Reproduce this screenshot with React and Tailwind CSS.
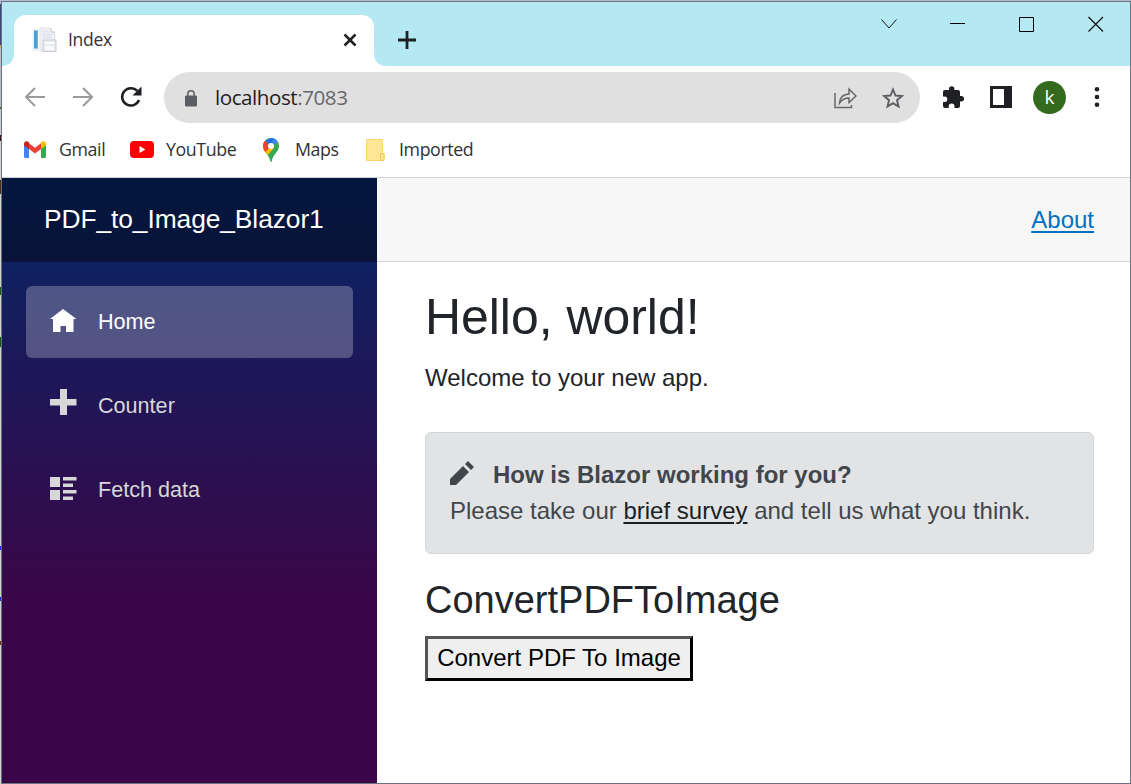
import React from "react";

const ui = "font-['Open_Sans','Noto_Sans',sans-serif]";

function Favicon() {
  return (
    <svg width="25" height="26" viewBox="0 0 25 26" className="mb-px shrink-0">
      <rect x="0.500" y="2" width="6" height="22" fill="#e9eff5" />
      <rect x="2" y="3.500" width="3.800" height="18" fill="#4f9fd0" />
      <path d="M8 1H19l3.500 4v19H8z" fill="#f2f3f6" stroke="#dcdfe3" strokeWidth="1" />
      <path d="M19 1v4h4" fill="#fff" stroke="#c5c9ce" />
      <path d="M10 4.500h7M10 7.500h10M10 10.500h10" stroke="#e0e2ec" strokeWidth="2" />
      <rect x="11" y="13" width="13" height="11.500" fill="#e8ebee" stroke="#c9cdd3" />
      <path d="M13 16h9" stroke="#fff" strokeWidth="2" />
      <rect x="13" y="19" width="9" height="4" fill="#f8f9fa" />
    </svg>
  );
}

function TitleBar() {
  return (
    <div className="flex h-16 shrink-0 items-end bg-[#b4e8f2]">
      <svg width="12" height="12" className="shrink-0"><path d="M12 0v12H0C7 12 12 7 12 0" fill="#fff" /></svg>
      <div className="flex h-[51px] w-[360px] shrink-0 items-center rounded-t-xl bg-white pl-[18px] pr-[17px]">
        <Favicon />
        <span className={`${ui} mb-0.5 ml-[11px] flex-1 text-[17.500px] tracking-[-0.3px] text-[#303236]`}>Index</span>
        <svg width="14" height="14" viewBox="0 0 14 14" className="mb-0.5"><path d="M1.500 1.500l11 11m0-11l-11 11" stroke="#1f2023" strokeWidth="2.500" /></svg>
      </div>
      <svg width="12" height="12" className="shrink-0"><path d="M0 0v12h12C5 12 0 7 0 0" fill="#fff" /></svg>
      <svg width="18" height="18" viewBox="0 0 18 18" className="mb-[17px] ml-[12px]"><path d="M9 0v18M0 9h18" stroke="#1f2023" strokeWidth="2.800" /></svg>
      <div className="mb-[34px] ml-auto mr-[26px] flex items-center gap-[53px]">
        <svg width="16" height="16" viewBox="0 0 16 16"><path d="M.5 3.500L8 12l7.500-8.500" fill="none" stroke="#111" /></svg>
        <svg width="16" height="16" viewBox="0 0 16 16"><path d="M0 7.500h15" stroke="#000" /></svg>
        <svg width="16" height="16" viewBox="0 0 16 16"><path d="M.5 1.500h14v14H.5z" fill="none" stroke="#000" /></svg>
        <svg width="16" height="16" viewBox="0 0 16 16"><path d="M.5 1l14.500 14.500m0-14.500L.5 15.500" stroke="#111" strokeWidth="1.200" /></svg>
      </div>
    </div>
  );
}

function Toolbar() {
  return (
    <div className="flex h-[63px] shrink-0 items-center pl-[23px] pr-[28px]">
      <svg width="20" height="20" viewBox="0 0 20 20" className="mb-0.5"><path d="M20 10H1.500M10 1l-9 9 9 9" fill="none" stroke="#9a9a9a" strokeWidth="2" /></svg>
      <svg width="20" height="20" viewBox="0 0 20 20" className="mb-0.5 ml-[28px]"><path d="M0 10h18.500M10 1l9 9-9 9" fill="none" stroke="#9a9a9a" strokeWidth="2" /></svg>
      <svg width="22" height="22" viewBox="0 0 22 22" className="mb-0.5 ml-[27px]">
        <path d="M17.300 5A8.700 8.700 0 1 0 19 14" fill="none" stroke="#1f2023" strokeWidth="2.500" />
        <path d="M21.500 .5v9h-9z" fill="#1f2023" />
      </svg>
      <div className="ml-[22px] flex h-[51px] w-[756px] items-center rounded-full bg-[#e0e0e0] pl-[21px] pr-[16px]">
        <svg width="12" height="17" viewBox="0 0 12 17" className="mt-0.5">
          <rect y="5.500" width="12" height="11" rx="1.200" fill="#5b5e63" />
          <path d="M2.800 6V4a3.200 3.200 0 0 1 6.400 0v2" fill="none" stroke="#5b5e63" strokeWidth="1.500" />
        </svg>
        <span className={`${ui} ml-[18px] flex-1 text-[20.600px] tracking-[-0.45px] text-[#1f2023]`}>localhost<span className="text-[#66686c]">:7083</span></span>
        <svg width="23" height="22" viewBox="0 0 23 22" className="mr-[25px]" fill="none" stroke="#66686c" strokeWidth="1.500">
          <path d="M1 6v14.500h16.500V18" />
          <path d="M5.500 16C6 10 9.500 7.200 15 7V2l7 7-7 6.500V11c-4.500 0-7 1.500-9.500 5z" />
        </svg>
        <svg width="22" height="22" viewBox="0 0 22 22"><path d="M11 2.500l2.500 6 6.400.5-4.900 4.200 1.500 6.300-5.500-3.400-5.500 3.400L7 13.200 2.100 9l6.400-.5z" fill="none" stroke="#5b5e63" strokeWidth="1.900" /></svg>
      </div>
      <svg width="22" height="22" viewBox="0 0 22 22" className="mb-0.5 ml-[22px]" fill="#1f2023"><path d="M17.500 10H19.300a2.700 2.700 0 0 1 0 5.400H18V20a2 2 0 0 1-2 2h-3.500v-1.500a2.900 2.900 0 0 0-5.800 0V22H3a2 2 0 0 1-2-2v-4h1.500a2.800 2.800 0 0 0 0-5.600H1V6a2 2 0 0 1 2-2h4V3a2.700 2.700 0 0 1 5.400 0v1H16a2 2 0 0 1 2 2v4z" /></svg>
      <svg width="22" height="22" viewBox="0 0 22 22" className="mb-0.5 ml-[26px]"><path d="M1.500 1.500h19v19h-19z" fill="#fff" stroke="#1f2023" strokeWidth="3" /><path d="M14 1h7v20h-7z" fill="#1f2023" /></svg>
      <div className={`${ui} ml-[21px] flex size-[33px] items-center justify-center rounded-full bg-[#336a1e] text-[19px] text-white`}>k</div>
      <svg width="6" height="20" viewBox="0 0 6 20" className="mb-0.5 ml-[28px]" fill="#1f2023"><circle cx="3" cy="2.300" r="2.300" /><circle cx="3" cy="10" r="2.300" /><circle cx="3" cy="17.700" r="2.300" /></svg>
    </div>
  );
}

function Bookmarks() {
  return (
    <div className={`${ui} flex h-[49px] shrink-0 items-center border-b border-[#d0d1d2] pb-[7px] pl-[22px] text-[17.800px] tracking-[-0.4px] text-[#303236]`}>
      <svg width="22" height="17" viewBox="0 0 22 17" className="mr-[13px]">
        <path d="M0 3v12.500A1.500 1.500 0 0 0 1.500 17H5V7z" fill="#4285f4" />
        <path d="M22 3v12.500a1.500 1.500 0 0 1-1.500 1.500H17V7z" fill="#34a853" />
        <path d="M5 2.200l6 4.600 6-4.600v5.800l-6 4.600L5 8z" fill="#ea4335" />
        <path d="M0 4.500V3C0 .3 2.800-.6 5 1.200V8z" fill="#c5221f" />
        <path d="M22 4.500V3c0-2.700-2.800-3.600-5-1.800V8z" fill="#fbbc04" />
      </svg>
      <span className="w-[71px]">Gmail</span>
      <svg width="24" height="17" viewBox="0 0 24 17" className="mr-[12px]"><rect width="24" height="17" rx="4" fill="#f00" /><path d="M9.500 5v7l6-3.500z" fill="#fff" /></svg>
      <span className="w-[97px]">YouTube</span>
      <svg width="16" height="24" viewBox="0 0 16 24" className="mr-[16px]">
        <defs><clipPath id="pin"><path d="M8 0a8 8 0 0 1 8 8c0 6-6 8-7.200 15q-.8 2-1.600 0C6 16 0 14 0 8a8 8 0 0 1 8-8z" /></clipPath></defs>
        <g clipPath="url(#pin)">
          <path d="M0 0h16v24H0z" fill="#34a853" />
          <path d="M8 8L-1 19V9l5-5z" fill="#fbbc04" />
          <path d="M8 8l-6.500 7L-1 10l4-8z" fill="#fbbc04" />
          <path d="M8 8l-5.500 6.200L-1 10V1l4 2z" fill="#ea4335" />
          <path d="M8 8l-7 7.500L4 18l7-8z" fill="#fbbc04" />
          <path d="M2 2.700L8 8l6-6L10-1z" fill="#1a73e8" />
          <path d="M11 0L8 8l7.500-4z" fill="#4285f4" />
        </g>
        <circle cx="8" cy="8" r="3" fill="#fff" />
      </svg>
      <span className="w-[71px]">Maps</span>
      <svg width="19" height="22" viewBox="0 0 19 22" className="mr-[14px]"><path d="M.5.500h16v14h1.500v7H.5z" fill="#ffe694" stroke="#fbd864" /><rect x="14.500" y="14.500" width="3.500" height="7" rx="1" fill="#ffe694" stroke="#eec94e" /></svg>
      <span>Imported</span>
    </div>
  );
}

function NavItem({ label, active, children }) {
  return (
    <a className={`flex h-[72px] items-center rounded-md pl-6 text-[21.6px] ${active ? "bg-white/25 text-white" : "text-[#d7d7d7]"}`}>
      <span className="w-12 pb-1">{children}</span>
      <span className="pt-px">{label}</span>
    </a>
  );
}

function Sidebar() {
  return (
    <aside className="flex w-[375px] shrink-0 flex-col bg-[linear-gradient(180deg,rgb(5,39,103)_0%,#3a0647_70%)]">
      <div className="flex h-[84px] items-center pl-[42px] bg-black/40 text-[26.4px] tracking-[-0.1px] text-white">PDF_to_Image_Blazor1</div>
      <nav className="flex flex-col gap-3 px-6 pt-6">
        <NavItem label="Home" active>
          <svg width="27" height="27" viewBox="0 0 27 27" fill="currentColor"><path d="M13 2L0 12h3v13h7.500v-6h5.500v6h7.500V12h3z" /></svg>
        </NavItem>
        <NavItem label="Counter">
          <svg width="27" height="27" viewBox="0 0 27 27" fill="currentColor" className="-mt-1"><path d="M10 0h7v10h9.500v6.500H17V26h-7v-9.500H0V10h10z" /></svg>
        </NavItem>
        <NavItem label="Fetch data">
          <svg width="27" height="27" viewBox="0 0 27 27" fill="currentColor"><path d="M0 2h10v10H0zM13 2h13.500v3.500H13zM13 8.500h10V12H13zM0 15h10v10H0zM13 15h13.500v3.500H13zM13 21.500h10V25H13z" /></svg>
        </NavItem>
      </nav>
    </aside>
  );
}

function Page() {
  return (
    <main className="flex-1 bg-white text-2xl leading-9 text-[#212529]">
      <div className="flex h-[84px] items-center justify-end border-b border-[#d6d5d5] bg-[#f7f7f7] pr-9 text-[#0071c1]">
        <a className="underline underline-offset-[3px]">About</a>
      </div>
      <article className="pl-12 pr-9 pt-[26.4px]">
        <h1 className="mb-3 text-[49.9px] leading-[59.9px]">Hello, world!</h1>
        <p>Welcome to your new app.</p>
        <div className="mb-6 mt-9 h-[122px] rounded-md border border-[#d3d6d8] bg-[#e2e3e5] p-6 text-[#41464b]">
          <div className="flex h-9 items-center">
            <svg width="24" height="24" viewBox="0 0 24 24" className="mb-1 mr-[19px]" fill="currentColor"><path d="M18 0l-3 3 6 6 3-3zM13 5L0 18v6h6L19 11z" /></svg>
            <strong>How is Blazor working for you?</strong>
          </div>
          <p>Please take our <a className="text-[#1a1e21] underline underline-offset-[3px]">brief survey</a> and tell us what you think.</p>
        </div>
        <h3 className="mb-3 text-[38px] leading-[45.6px]">ConvertPDFToImage</h3>
        <button className="block h-[45px] w-[268px] whitespace-nowrap border-[3px] border-b-black border-l-[#555] border-r-black border-t-[#555] bg-[#efefef] text-black">Convert PDF To Image</button>
      </article>
    </main>
  );
}

const backdrop =
  "bg-[linear-gradient(180deg,#b4bccf_0_4px,#37457a_4px_45px,#cfa96a_45px_48px,#b9bdc6_48px_107px,#3d5a22_107px_109px,#c8ccd2_109px_135px,#3a1405_135px_141px,#d0d2d2_141px_180px,#4a2a10_180px_194px,#d0d2d2_194px_287px,#0f5a0f_287px_295px,#d0d2d2_295px_337px,#0f5a0f_337px_347px,#d0d2d2_347px_546px,#2020e0_546px_550px,#d0d2d2_550px_597px,#2020e0_597px_601px,#d0d2d2_601px_641px,#7a2a08_641px_645px,#d0d2d2_645px)]";

export default function App() {
  return (
    <div className={`h-[784px] w-[1131px] pl-px font-['Liberation_Sans',Arial,sans-serif] ${backdrop}`}>
      <div className="h-full border-t border-[#b4bccf]">
        <div className="flex h-full flex-col overflow-hidden border border-[#6b7280] bg-white">
          <TitleBar />
          <Toolbar />
          <Bookmarks />
          <div className="flex min-h-0 flex-1">
            <Sidebar />
            <Page />
          </div>
        </div>
      </div>
    </div>
  );
}
